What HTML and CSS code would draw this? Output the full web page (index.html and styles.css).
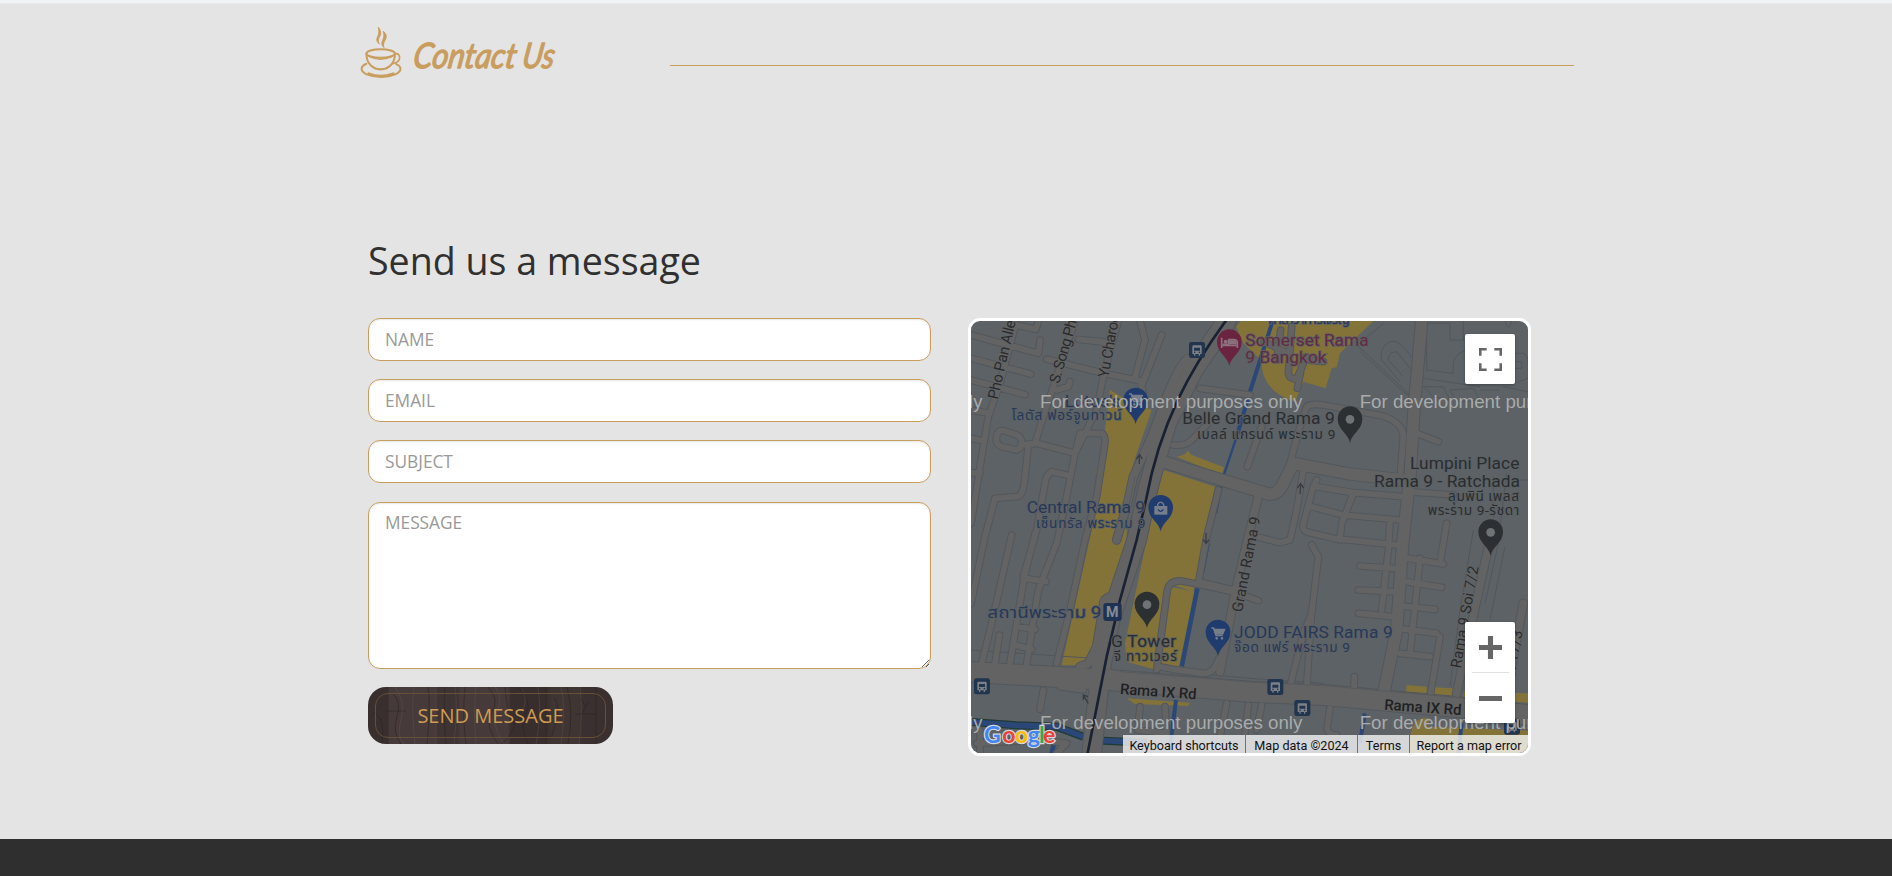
FILE: index.html
```html
<!DOCTYPE html>
<html lang="en">
<head>
<meta charset="utf-8">
<title>Contact Us</title>
<link rel="stylesheet" href="styles.css">
</head>
<body>
<main class="page">
  <header class="section-head">
    <svg class="cup" viewBox="30 78 126 160" aria-hidden="true">
      <g fill="none" stroke="#c99d5e" stroke-linecap="round">
        <ellipse cx="92" cy="161" rx="43" ry="13" stroke-width="6"/>
        <path d="M49 163C49 188 66 209 92 209S135 188 135 163" stroke-width="6"/>
        <path d="M57 170Q92 187 127 170" stroke-width="4"/>
        <path d="M134 163C144 158 151 167 149 176C147 186 138 190 127 192" stroke-width="5"/>
        <path d="M49 192C28 201 31 216 50 224C77 235 112 234 136 224C156 215 157 201 139 193" stroke-width="6"/>
        <path d="M56 222Q91 236 130 222" stroke-width="8"/>
        <path d="M64 199Q91 218 120 199" stroke-width="5"/>
      </g>
      <path fill="#c99d5e" stroke="#c99d5e" stroke-width="3" d="M85 82C98 100 90 106 86 116C84 122 85 127 88 132C75 122 82 113 85 105C88 97 86 90 85 82ZM100 94C116 108 106 118 102 128C100 134 100 138 102 143C91 134 97 124 100 116C103 108 102 101 100 94Z"/>
    </svg>
    <h1 class="script-title">
      <svg class="script-svg" viewBox="0 0 146 48"><g transform="translate(0 38) skewX(-9)"><text x="2" y="0" textLength="103" lengthAdjust="spacingAndGlyphs">Contact</text><text x="111" y="0" textLength="32" lengthAdjust="spacingAndGlyphs">Us</text></g></svg>
    </h1>
    <div class="rule"></div>
  </header>

  <h2 class="form-title">Send us a message</h2>
  <div class="columns">
    <form class="form">
      <input class="field" type="text" placeholder="NAME">
      <input class="field" type="text" placeholder="EMAIL">
      <input class="field" type="text" placeholder="SUBJECT">
      <textarea class="field field-area" placeholder="MESSAGE"></textarea>
      <button class="send" type="button">
        <svg class="grain" viewBox="0 0 245 57" aria-hidden="true"><g fill="none" stroke="#2c2423" stroke-opacity=".6"><path d="M3 30Q7 22 9 28Q17 33 14 57M20 0V57M24 6Q34 14 29 30T33 57M18 24H38M60 0Q63 20 59 57M77 0Q75 20 78 57M97 0Q94 30 98 57M120 0Q132 12 124 25T130 57M137 0Q139 28 145 34T134 57M150 0Q165 14 158 26T160 57M178 0V57M186 10Q193 20 188 35T184 50M199 0Q206 25 200 57M207 27H228M228 0V57M213 12L218 20M220 15L214 27"/></g><g fill="none" stroke="#62534f" stroke-opacity=".45"><path d="M27 0Q38 16 33 33T36 57M46 0Q43 20 47 57M68 0V57M87 0Q90 20 86 57M108 0Q105 22 108 57M127 0Q136 12 129 24T136 57M154 2Q160 12 155 22M170 0Q174 25 168 57M193 0Q198 20 193 57M212 0Q215 28 211 57"/></g></svg>
        <span class="send-label">SEND MESSAGE</span>
      </button>
    </form>

    <div class="map">
      <svg class="map-art" viewBox="33 33 1671 1296" preserveAspectRatio="none">
        <defs>
          <path id="small" d="M165 50L120 220L85 320L65 440L33 640M33 75L235 130L240 90M33 145L212 192M33 210L195 254M165 45L228 58L236 30M345 33L290 200L250 320L225 400M355 88L450 98M475 33L450 120L430 200L410 300L345 430M260 148L310 160L430 190L540 212L550 250M605 75L548 220M540 33L555 90L525 200M290 240L325 230L330 215M110 380Q112 360 130 362L168 374Q185 380 185 400Q180 425 160 418L125 410Q105 402 110 380M185 405L230 400L345 430M205 405L195 500Q190 560 170 560L105 565L75 680L33 880M345 430L360 370L425 370Q437 375 435 400L410 560L375 690L330 900L290 1060M320 495L275 485Q258 495 255 520L230 660L190 800M345 430L320 560L290 700L235 840L200 1060M155 675L120 830L90 960L65 1060M225 670L193 800L150 1060M195 805L258 815M172 950L225 958M165 1005L215 1018M118 975L105 1060M250 1140L240 1198M33 300L90 310M33 385L70 392M33 488L60 490M862 470L905 350M990 460L1020 350L1040 290Q1055 280 1090 285L1270 318Q1330 340 1330 380L1320 510M1370 370L1435 395M1055 705L1075 740L1055 910L1030 970L990 1130M1055 900L1040 1130M1030 480L1010 600L990 690L960 698L890 680M1070 510L1060 530L1030 640Q1025 665 1050 668L1120 685L1310 705M1070 530L1180 548L1330 560M1055 590L1150 615L1320 630M1180 550L1145 640L1140 690M1290 630L1285 720L1265 900M1460 640L1440 760M1345 545L1480 555M1200 768L1300 775M1195 840L1300 845M1195 910L1300 920M1345 745L1450 762M1340 815L1445 832M1325 888L1425 898M1315 955L1430 970M1320 1030L1410 1040M1380 745L1350 1030M1440 980L1410 1160M590 1080L622 840Q630 810 665 813L830 845M600 1070L640 1078L730 1090Q755 1090 765 1070L780 1040M775 540L740 680L715 820M640 405Q680 410 700 385L740 345M720 235L870 255M820 845L895 872M1183 1100L1182 1140M540 1190L533 1260L620 1270L615 1190M800 1180L770 1330M1110 1195L1102 1250Q1100 1275 1130 1275M865 1185L855 1270M905 1185L890 1260M50 1300L250 1290L320 1300L290 1330M60 1260V1330M370 1140L300 1130M962 60L950 150M912 95L985 130M995 50L985 190Q985 205 1010 208L1022 180L1038 140M1022 185L1012 235M1040 150L1090 155"/>
          <path id="medium" d="M685 145Q665 150 620 260L575 380L520 500L505 570L470 690M450 860Q430 865 430 890L410 1010L385 1060L360 1070M720 820L830 845M895 560L860 700L825 850L780 1085M1590 690L1550 870L1490 1150M1690 880L1640 1150"/>
          <path id="big" d="M1385 33L1362 300L1350 500L1328 700L1310 960L1272 1145M610 455L720 490L925 552Q955 555 970 520L1000 460L1170 492L1330 510"/>
          <path id="huge" d="M800 33L700 180L620 340L565 530L530 690L450 930L425 1060L395 1330"/>
          <path id="rama" d="M33 1086L450 1110L870 1145L1090 1155L1480 1190L1704 1215"/>
          <g id="pin"><path d="M0 70C-5 42-37 32-37-2A37 37 0 1 1 37-2C37 32 5 42 0 70Z"/></g>
          <g id="bus"><rect x="-24" y="-24" width="48" height="48" rx="7" fill="#22354f"/><path d="M-11-14H11Q14-14 14-10V12H9V17H5V12H-5V17H-9V12H-14V-10Q-14-14-11-14Z" fill="#7c8187"/><path d="M-9-7H9V2H-9Z" fill="#22354f"/><circle cx="-7" cy="7" r="2.4" fill="#22354f"/><circle cx="7" cy="7" r="2.4" fill="#22354f"/></g>
          <g id="cart" fill="none" stroke="#777e8b" stroke-width="4"><path d="M-20-16H-13L-6 7H14"/><path d="M-12-12H20L14 2H-7Z" fill="#777e8b"/><circle cx="-4" cy="15" r="2"/><circle cx="12" cy="15" r="2"/></g>
        </defs>
        <rect x="33" y="33" width="1671" height="1296" fill="#5c6266"/>
        <g fill="#847339">
          <path d="M450 240L500 270L575 300L520 460L500 560L500 680L460 860L440 940L400 1065L305 1066L395 660L430 500L408 490L430 400Z"/>
          <path d="M610 480L765 530L700 845L640 825L590 1080L500 1055L495 1000L560 690Z"/>
          <path d="M630 830L705 845L660 1090L600 1075ZM650 440L675 433L683 422L695 435L792 472L785 495Z"/>
          <path d="M828 50L842 33H1240L1140 130L1130 172L1115 175L1097 235L1030 215L1005 275Q905 245 903 150L850 100Z"/>
          <path d="M500 1165L690 1178L685 1188L525 1182ZM1340 1125L1400 1130V1150L1338 1146ZM1424 1132L1492 1136L1488 1160L1422 1154ZM1512 1145L1704 1150V1178L1508 1166ZM1350 1329V1280Q1362 1225 1390 1225H1410L1400 1250L1704 1262V1329Z"/>
        </g>
        <g fill="none" stroke="#2b4777">
          <path d="M938 33L870 245L830 380" stroke-width="12"/><path d="M830 380L790 500L768 610M746 700L730 785" stroke-width="7"/>
          <path d="M712 835L665 1070" stroke-width="14"/><path d="M648 1170L630 1310M1214 1210L1200 1300M1505 1240L1495 1329" stroke-width="12"/>
          <path d="M33 1236L170 1246L290 1250L370 1280M430 1292L560 1298" stroke="#1f3a33" stroke-width="24"/>
          <path d="M33 1236L170 1246L290 1250L370 1280M430 1292L560 1298" stroke-width="17"/><path d="M282 1300L275 1330" stroke-width="14"/>
        </g>
        <g fill="none" stroke="#51575c" stroke-width="3">
          <path d="M1270 40L1200 100M1200 125L1330 245L1370 275M1190 105L1350 255M1320 215L1265 150Q1255 115 1290 95Q1310 90 1330 110L1375 165M1330 200L1285 150Q1285 125 1310 125L1355 180M1400 33V180L1480 190V160Q1485 130 1520 120L1545 125M1390 205L1560 230M1400 40H1470V90H1510V33M1390 230H1450L1470 270L1420 260ZM1470 240L1540 235L1560 270L1490 275ZM1560 240H1620M1630 230L1704 245M1660 130H1690Q1704 135 1704 160V205L1675 215M1665 155H1685V175H1665M1635 33Q1648 70 1655 33M1600 500V620M1640 490L1620 650M1540 660L1500 900L1470 1130M1640 510H1704M1635 710L1590 930M1615 700L1575 880M33 1020L400 1045M700 1090L870 1105L1090 1120M1090 1150L1300 1165"/>
        </g>
        <g fill="none" stroke-linejoin="round" stroke-linecap="round">
          <g stroke="#52575c"><use href="#small" stroke-width="23"/><use href="#medium" stroke-width="29"/><use href="#big" stroke-width="40"/><use href="#huge" stroke-width="62"/><use href="#rama" stroke-width="66"/></g>
          <g stroke="#636363"><use href="#small" stroke-width="17"/><use href="#medium" stroke-width="23"/><use href="#big" stroke-width="34"/><use href="#huge" stroke-width="56"/><use href="#rama" stroke-width="60"/></g>
          <path d="M480 1085L870 1116L1090 1127L1520 1165M525 500L505 600M540 1085L600 1090" stroke="#53565a" stroke-width="2"/>
          <path d="M797 33C690 180 600 340 558 570L530 690L480 870L440 1040L383 1329" stroke="#182234" stroke-width="8"/>
        </g>
        <g fill="none" stroke="#393c40" stroke-width="4"><path d="M538 462V435M529 447L539 434L547 447M1020 552L1022 523M1012 534L1022 521L1031 534M738 668V698M729 688L738 700L747 689M385 1180L371 1157M370 1170V1155L384 1160"/></g>

        <g class="road-label">
          <text transform="translate(113 270) rotate(-77)" textLength="262">Pho Pan Alley</text>
          <text transform="translate(297 223) rotate(-74)" textLength="232">S. Song Phra</text>
          <text transform="translate(445 205) rotate(-80)" textLength="215">Yu Charoen</text>
          <text transform="translate(846 908) rotate(-79)" textLength="290">Grand Rama 9</text>
          <text transform="translate(1502 1076) rotate(-80)" textLength="310">Rama 9 Soi 7/2</text>
          <text transform="translate(1658 1133) rotate(-80)" textLength="172">Soi 17/3</text>
        </g>
        <g class="road-label road-major">
          <text transform="translate(479 1152) rotate(4)" textLength="230">Rama IX Rd</text>
          <text transform="translate(1272 1199) rotate(4)" textLength="232">Rama IX Rd</text>
        </g>
        <g class="poi blue">
          <text x="314" y="290" textLength="168">Lotus's</text><text class="thai" x="155" y="330" textLength="330">โลตัส ฟอร์จูนทาวน์</text>
          <text x="200" y="609" textLength="355">Central Rama 9</text><text class="thai" x="228" y="653" textLength="328">เซ็นทรัล พระราม 9</text>
          <text class="station" x="82" y="923" textLength="342" lengthAdjust="spacingAndGlyphs">สถานีพระราม 9</text>
          <text x="822" y="984" textLength="476">JODD FAIRS Rama 9</text><text class="thai" x="822" y="1027" textLength="348">จ๊อด แฟร์ พระราม 9</text>
          <text class="thai" x="925" y="42" textLength="245">ศาลาว่าการเจริญ</text>
        </g>
        <g class="poi red"><text x="856" y="108" textLength="370">Somerset Rama</text><text x="856" y="159" textLength="244">9 Bangkok</text></g>
        <g class="poi gray">
          <text x="667" y="343" textLength="457">Belle Grand Rama 9</text><text class="thai" x="711" y="387" textLength="415">เบลล์ แกรนด์ พระราม 9</text>
          <text x="1350" y="478" textLength="328">Lumpini Place</text><text x="1242" y="531" textLength="438">Rama 9 - Ratchada</text>
          <text class="thai" x="1464" y="573" textLength="213">ลุมพินี เพลส</text><text class="thai" x="1403" y="615" textLength="275">พระราม 9-รัชดา</text>
          <text x="453" y="1010" textLength="195">G Tower</text><text class="thai" x="461" y="1052" textLength="190">จี ทาวเวอร์</text>
        </g>
        <use href="#pin" x="527" y="272" fill="#203b6d"/><use href="#cart" x="527" y="268"/>
        <use href="#pin" x="602" y="594" fill="#203b6d"/><path d="M583 588H622V614H583Z" fill="#777e8b"/><path d="M593 588V583Q602 570 611 583V588" fill="none" stroke="#777e8b" stroke-width="4"/><path d="M594 598Q602 610 610 598" fill="none" stroke="#203b6d" stroke-width="4"/>
        <use href="#pin" x="774" y="968" fill="#203b6d"/><use href="#cart" x="774" y="970"/>
        <use href="#pin" x="808" y="97" fill="#6b2440"/><path d="M785 83V114M785 106H832V114M832 106V96Q830 89 822 89H806V103H789" fill="none" stroke="#8b707d" stroke-width="5"/><path d="M807 91H823Q830 92 830 103H807Z" fill="#8b707d"/><circle cx="797" cy="95" r="6" fill="#8b707d"/>
        <g fill="#2c3032"><use href="#pin" x="1170" y="328"/><use href="#pin" x="1592" y="667"/><use href="#pin" x="561" y="884"/></g>
        <g fill="#707375"><circle cx="1170" cy="328" r="13"/><circle cx="1592" cy="667" r="13"/><circle cx="561" cy="884" r="13"/></g>
        <use href="#bus" x="711" y="120"/><use href="#bus" x="66" y="1129"/><use href="#bus" x="946" y="1131"/><use href="#bus" x="1027" y="1194"/><use href="#bus" x="1656" y="1250"/>
        <rect x="430" y="879" width="55" height="54" rx="9" fill="#203252"/><text x="457" y="922" class="metro">M</text>
        <g class="watermark">
          <text x="67" y="294" text-anchor="end">only</text><text x="240" y="294" textLength="787" lengthAdjust="spacingAndGlyphs">For development purposes only</text><text x="1199" y="294" textLength="787" lengthAdjust="spacingAndGlyphs">For development purposes only</text>
          <text x="67" y="1256" text-anchor="end">only</text><text x="240" y="1256" textLength="787" lengthAdjust="spacingAndGlyphs">For development purposes only</text><text x="1199" y="1256" textLength="787" lengthAdjust="spacingAndGlyphs">For development purposes only</text>
        </g>
        <g class="brand brand-halo"><text y="1299"><tspan x="72">G</tspan><tspan x="127">o</tspan><tspan x="165">o</tspan><tspan x="203">g</tspan><tspan x="237">l</tspan><tspan x="249">e</tspan></text></g>
        <text class="brand" y="1299" aria-hidden="true"><tspan x="72" fill="#4285f4">G</tspan><tspan x="127" fill="#ea4335">o</tspan><tspan x="165" fill="#fbbc04">o</tspan><tspan x="203" fill="#4285f4">g</tspan><tspan x="237" fill="#34a853">l</tspan><tspan x="249" fill="#ea4335">e</tspan></text>
      </svg>
      <button class="map-control fullscreen" type="button" aria-label="Fullscreen"><svg viewBox="0 0 18 18"><path d="M0 0V6H2V2H6V0ZM12 0V2H16V6H18V0ZM16 12V16H12V18H18V12ZM2 12H0V18H6V16H2Z"/></svg></button>
      <div class="map-control zoom">
        <button class="zoom-button" type="button" aria-label="Zoom in"><svg viewBox="0 0 18 18"><path d="M7 0H11V7H18V11H11V18H7V11H0V7H7Z"/></svg></button>
        <div class="zoom-line"></div>
        <button class="zoom-button" type="button" aria-label="Zoom out"><svg viewBox="0 0 18 18"><path d="M0 7H18V11H0Z"/></svg></button>
      </div>
      <div class="credits"><span class="credit c1">Keyboard shortcuts</span><span class="credit c2">Map data ©2024</span><span class="credit c3">Terms</span><span class="credit c4">Report a map error</span></div>
    </div>
  </div>
</main>
<footer class="footer"></footer>
</body>
</html>
```
FILE: styles.css
```css
* { box-sizing: border-box; }
body { margin: 0; height: 876px; overflow: hidden; display: flex; flex-direction: column; background: #e4e4e4; font-family: "Open Sans", sans-serif; }
.page { height: 839px; flex: none; border-top: 3px solid #f1f3f5; box-shadow: inset 0 1px #e9e9ea; }
.section-head { display: flex; height: 100px; padding: 23px 0 0 360px; }
.cup { width: 42px; height: 53px; flex: none; }
.script-title { margin: 4px 0 0 8px; width: 146px; height: 48px; flex: none; }
.script-svg { display: block; width: 146px; height: 48px; overflow: visible; }
.script-svg text { font: italic 400 35px Lato, sans-serif; fill: #c99d5e; stroke: #c99d5e; stroke-width: 1.3px; stroke-linejoin: round; }
.rule { width: 904px; height: 1px; margin: 39px 0 0 114px; background: #c99d5e; }
.form-title { margin: 131px 0 0 368px; height: 52px; line-height: 53px; font-size: 37.6px; font-weight: 400; color: #303030; }
.columns { display: flex; gap: 37px; padding: 32px 0 0 368px; }
.form { width: 563px; display: flex; flex-direction: column; align-items: flex-start; }
.field { width: 100%; height: 42.5px; margin: 0 0 18.7px; padding: 0 16px; border: 1px solid #c99d5e; border-radius: 12px; background: #fff; box-shadow: inset 0 1px 2px rgba(0,0,0,.1); font: 17.3px "Open Sans", sans-serif; color: #555; outline: 0; }
.field::placeholder { color: #999; opacity: 1; }
.field-area { height: 167px; padding-top: 8px; resize: vertical; }
.send { display: grid; width: 245px; height: 57px; padding: 0; border: 0; border-radius: 18px; overflow: hidden; color: #cf9b52; font: 20px "Open Sans", sans-serif; background: linear-gradient(90deg, #382f2e 0 19px, #463b3a 20px 67px, #3e3433 69px 90px, #463b3a 92px 140px, #382e2d 143px 178px, #3f3533 184px 210px, #3a302f 216px); }
.grain { grid-area: 1 / 1; width: 245px; height: 57px; }
.send-label { grid-area: 1 / 1; display: flex; align-items: center; justify-content: center; margin: 6px 7px; height: 45px; border: 1px solid #665037; border-radius: 13px; padding-bottom: 1px; z-index: 1; }
.map { position: relative; width: 563px; height: 438px; border: 3px solid #fff; border-radius: 12px; overflow: hidden; }
.map-art { display: block; width: 557px; height: 432px; }
.road-label, .poi { font-family: Roboto, "Noto Sans Thai", sans-serif; }
.road-label { font-size: 45px; fill: #292b2d; stroke: #646464; stroke-width: 5px; paint-order: stroke; }
.road-major { font-weight: 500; fill: #202123; }
.poi { font-size: 52px; stroke: #5d6164; stroke-width: 5px; paint-order: stroke; }
.thai { font-size: 41px; }
.station { font-size: 48px; }
.blue { fill: #26385a; }
.red { fill: #622b43; }
.gray { fill: #292d30; }
.metro { font: 700 43px Roboto, sans-serif; fill: #858b94; text-anchor: middle; }
.watermark { font: 55px "Liberation Sans", sans-serif; fill: #aaabab; }
.brand { font: 700 69px Lato, sans-serif; }
.brand-halo { fill: #d5d8dc; stroke: #d5d8dc; stroke-width: 7px; }
.map-control { position: absolute; right: 13px; width: 50px; background: #fff; border: 0; border-radius: 2px; box-shadow: 0 1px 3px rgba(0,0,0,.3); }
.map-control svg { display: block; width: 23px; height: 23px; fill: #666; }
.fullscreen { top: 13px; height: 50px; padding: 13px 13px 13px 14px; }
.zoom { top: 301px; height: 101px; display: flex; flex-direction: column; align-items: center; }
.zoom-button { width: 50px; height: 50px; padding: 13px 13px 13px 14px; border: 0; background: none; }
.zoom-line { width: 37px; height: 1px; background: #e1e1e1; }
.credits { position: absolute; right: 0; bottom: 0; height: 18px; display: flex; background: rgba(245,245,245,.8); font: 12.6px/21px Roboto, sans-serif; color: #111; white-space: nowrap; }
.credit { display: flex; justify-content: center; }
.credit + .credit { border-left: 1px solid #6c7480; }
.c1 { width: 122px; }
.c2 { width: 112px; }
.c3 { width: 52px; }
.c4 { width: 119px; }
.footer { height: 37px; background: #2f2f2f; }
```
